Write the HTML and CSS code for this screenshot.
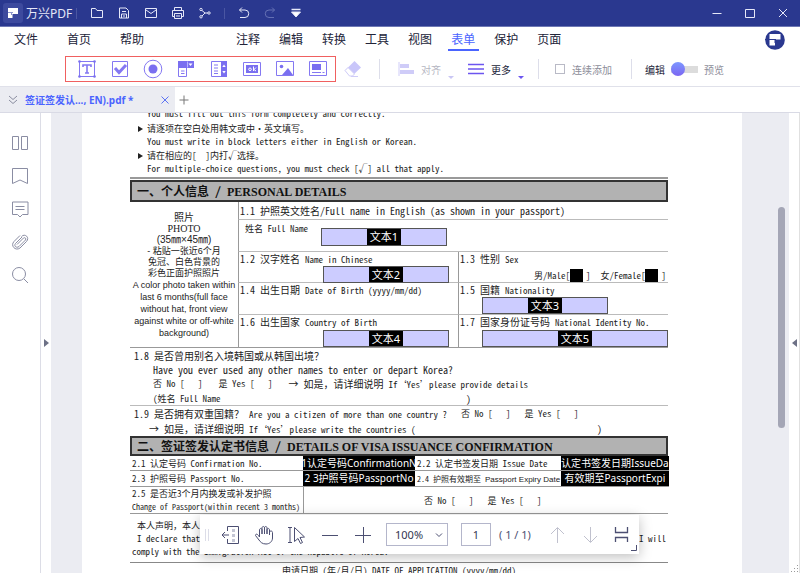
FILE: index.html
```html
<!DOCTYPE html>
<html lang="zh-CN">
<head>
<meta charset="utf-8">
<title>万兴PDF</title>
<link rel="stylesheet" href="styles.css">
</head>
<body>
<div class="app">
  <header class="titlebar">
    <span class="logo"><svg width="20" height="20" viewBox="0 0 20 20"><rect width="20" height="20" rx="3" fill="#3d4a9e"/><path d="M5 5h10v6H9.500V15H5z" fill="#fff"/><path d="M5 9.500h5M8.500 9v3" stroke="#8c95cc" fill="none"/></svg></span>
    <span class="brand">万兴PDF</span>
    <i class="tsep"></i>
    <div class="quick">
      <button aria-label="打开"><svg width="16" height="16" viewBox="0 0 16 16"><path d="M2.500 12.500v-9h4l1.500 2h5.500v7z"/></svg></button>
      <button aria-label="保存"><svg width="16" height="16" viewBox="0 0 16 16"><path d="M3.500 3h6.500l2.500 2.500v7.500h-9zM5.500 13V9h5v4M6 6.500h4M7 11h2"/></svg></button>
      <button aria-label="邮件"><svg width="16" height="16" viewBox="0 0 16 16"><path d="M2.500 3.500h11v9h-11zM3 5l5 3.500L13 5"/></svg></button>
      <button aria-label="打印"><svg width="16" height="16" viewBox="0 0 16 16"><path d="M4.500 5.500v-3h7v3M4.500 11.500h-2v-6h11v6h-2M4.500 8.500h7v5h-7zM6 11h4"/></svg></button>
      <button aria-label="分享"><svg width="16" height="16" viewBox="0 0 16 16"><path d="M5 5.500l3 2.500h3M5 11l3-3"/><circle cx="4" cy="4.500" r="1.200"/><circle cx="4" cy="11.800" r="1.200"/><circle cx="12" cy="8" r="1.200"/></svg></button>
    </div>
    <i class="tsep"></i>
    <div class="history">
      <button aria-label="撤销"><svg width="16" height="16" viewBox="0 0 16 16"><path d="M6 2.500L3.500 5 6 7.500M3.500 5H9a3.700 3.700 0 0 1 0 7.500H4"/></svg></button>
      <button aria-label="重做" class="dim"><svg width="16" height="16" viewBox="0 0 16 16"><path d="M10 2.500L12.500 5 10 7.500M12.500 5H7a3.700 3.700 0 0 0 0 7.500h5"/></svg></button>
      <button aria-label="自定义"><svg width="16" height="16" viewBox="0 0 16 16"><path d="M3.500 4.500h9" stroke-width="1.500"/><path d="M3.500 7h9L8 12z" fill="#fff"/></svg></button>
    </div>
    <div class="window">
      <button aria-label="最小化"><svg width="12" height="12" viewBox="0 0 12 12"><path d="M1.500 6.500h9"/></svg></button>
      <button aria-label="最大化"><svg width="12" height="12" viewBox="0 0 12 12"><path d="M1.500 2.500h9v8h-9z"/></svg></button>
      <button aria-label="关闭"><svg width="12" height="12" viewBox="0 0 12 12"><path d="M2 2l8 8M10 2l-8 8"/></svg></button>
    </div>
  </header>

  <nav class="menu">
    <div class="group first"><a href="#">文件</a><a href="#">首页</a><a href="#">帮助</a></div>
    <div class="group"><a href="#">注释</a><a href="#">编辑</a><a href="#">转换</a><a href="#">工具</a><a href="#">视图</a><a href="#" class="on">表单</a><a href="#">保护</a><a href="#">页面</a></div>
    <span class="account"><svg width="20" height="20" viewBox="0 0 20 20"><circle cx="10" cy="10" r="9.800" fill="#2a388f"/><path d="M4.500 4h11v5.500H10v6H4.500z" fill="#fff"/><path d="M0 9.500h11M10 9v4" stroke="#2a388f" fill="none"/></svg></span>
  </nav>

  <div class="tools">
    <div class="fields">
      <button aria-label="文本域"><svg width="20" height="20" viewBox="0 0 20 20"><path d="M2.500 2.500h15v15h-15z"/><path d="M6 8V6h8v2M10 6v8M8 14h4" stroke-width="1.600"/><g class="solid"><circle cx="2.500" cy="2.500" r="1.300"/><circle cx="17.500" cy="2.500" r="1.300"/><circle cx="2.500" cy="17.500" r="1.300"/><circle cx="17.500" cy="17.500" r="1.300"/></g></svg></button>
      <button aria-label="复选框"><svg width="20" height="20" viewBox="0 0 20 20"><path d="M2.500 2.500h15v15h-15z"/><path d="M5 9l4 4.500 7-7.500" stroke-width="3"/></svg></button>
      <button aria-label="单选按钮"><svg width="20" height="20" viewBox="0 0 20 20"><circle cx="10" cy="10" r="8.800"/><circle cx="10" cy="10" r="4.500" class="solid"/></svg></button>
      <button aria-label="组合框"><svg width="20" height="20" viewBox="0 0 20 20"><path d="M2 2h16v7H2z" class="solid"/><path d="M2.500 9v8.500h8V9M5 12h3.500M5 14.500h3.500"/><path d="M12.500 4.500h4L14.500 7z" fill="#fff" stroke="none"/><path d="M11.500 2.500v6" stroke="#b8b4ff"/></svg></button>
      <button aria-label="列表框"><svg width="20" height="20" viewBox="0 0 20 20"><path d="M2.500 2.500h15v15h-15zM5 6h4M5 9h4M5 12h4M5 14.500h4"/><path d="M12 2h6v16h-6z" class="solid"/><path d="M13.300 8L15 5.500 16.700 8zM13.300 12L15 14.500l1.700-2.500z" fill="#fff" stroke="none"/></svg></button>
      <button aria-label="按钮"><svg width="20" height="20" viewBox="0 0 20 20"><path d="M1.500 3.500h17v13h-17z"/><path d="M4 6h12v8H4z" class="solid"/><circle cx="8" cy="10.300" r="1.300" stroke="#fff"/><path d="M11.500 7.500v4.500M14 8.500L12 10.500l2 1.500" stroke="#fff"/></svg></button>
      <button aria-label="图像"><svg width="20" height="20" viewBox="0 0 20 20"><path d="M1.500 2.500h17v14h-17z"/><path d="M7 16l6-7 5 7z" class="solid"/><circle cx="6.500" cy="7.500" r="1.800" class="solid"/></svg></button>
      <button aria-label="签名域"><svg width="20" height="20" viewBox="0 0 20 20"><path d="M1.500 2.500h17v14h-17z"/><path d="M4 5h9v6H4z" class="solid"/><path d="M4 13.500h9M14.500 13.500h2"/></svg></button>
    </div>
    <button class="eraser" aria-label="清除"><svg width="20" height="20" viewBox="0 0 20 20"><path d="M2 11.500L11.500 2 18 8.500 9.500 16.500z" fill="#c9c6fa"/><path d="M2 11.500l3-3 6.500 6.500-2 2H6.500z" fill="#fff" stroke="#cfccf8"/><path d="M8 17.500h7" stroke="#cfccf8"/></svg></button>
    <i class="sep"></i>
    <button class="txt faded"><svg width="16" height="16" viewBox="0 0 16 16"><path d="M1 1v14" stroke="#cfccf8"/><path d="M2 3h9v4H2zM2 9h14v4H2z" fill="#cfccf8"/></svg><span>对齐</span><i class="caret"></i></button>
    <button class="txt"><svg width="16" height="16" viewBox="0 0 16 16"><path d="M0 3.500h16M0 8h16M0 12.500h16" stroke="#6c55f0" stroke-width="1.500"/></svg><span>更多</span><i class="caret"></i></button>
    <i class="sep"></i>
    <label class="keep"><input type="checkbox">连续添加</label>
    <i class="sep"></i>
    <label class="mode"><span>编辑</span><input type="range" min="0" max="1" value="0" aria-label="编辑或预览"><span class="off">预览</span></label>
  </div>

  <div class="tabs">
    <div class="tab"><svg width="10" height="10" viewBox="0 0 10 10"><path d="M1 1l4 3.500L9 1M1 5l4 3.500L9 5" stroke="#8a8da0"/></svg><strong>签证签发认..., EN).pdf *</strong><button aria-label="关闭标签"><svg width="10" height="10" viewBox="0 0 10 10"><path d="M1.500 1.500l7 7M8.500 1.500l-7 7" stroke="#5b72f5"/></svg></button></div>
    <button class="plus" aria-label="新建标签"><svg width="10" height="10" viewBox="0 0 10 10"><path d="M.5 5h9M5 .5v9" stroke="#777"/></svg></button>
  </div>

  <div class="work">
    <aside class="side">
      <button aria-label="缩略图"><svg width="20" height="20" viewBox="0 0 20 20"><path d="M2.500 3.500h6v13h-6zM11.500 3.500h6v13h-6z"/></svg></button>
      <button aria-label="书签"><svg width="20" height="20" viewBox="0 0 20 20"><path d="M2.500 2.500h15v15L10 14l-7.500 3.500z"/></svg></button>
      <button aria-label="注释"><svg width="20" height="20" viewBox="0 0 20 20"><path d="M2.500 3h15.500v12.500h-5.500L10 18l-2.500-2.500h-5zM5.500 7.500h9M5.500 10.500h9"/></svg></button>
      <button aria-label="附件"><svg width="20" height="20" viewBox="0 0 20 20"><path d="M12 5L5.500 11.500c-2 2.500 1 5 3.500 3L15.500 8c1-1.500-.5-3-2-2L7 12.500M10 3.500L4 9.500c-4 4 1.500 10 6 6.500l6.500-6.500c3.500-4-1.500-8.500-5-5"/></svg></button>
      <button aria-label="搜索"><svg width="20" height="20" viewBox="0 0 20 20"><circle cx="9" cy="9" r="6.500"/><path d="M14 14l4 4"/></svg></button>
    </aside>
    <button class="handle" aria-label="展开左侧面板"><i class="right"></i></button>
    <main class="canvas">
      <article class="page">
        <div class="intro">
          <p class="en top">You must fill out this form completely and correctly.</p>
          <p class="li">请逐项在空白处用韩文或中·英文填写。</p>
          <p class="en">You must write in block letters either in English or Korean.</p>
          <p class="li">请在相应的[&emsp;]内打√选择。</p>
          <p class="en">For multiple-choice questions, you must check [√] all that apply.</p>
        </div>
        <h2>一、个人信息 / <b>PERSONAL DETAILS</b></h2>
        <section class="personal">
          <div class="photo"><p class="big">照片</p><p class="serif">PHOTO</p><p class="big">(35㎜×45㎜)</p><p class="zh">- 粘贴一张近6个月</p><p class="zh">免冠、白色背景的</p><p class="zh">彩色正面护照照片</p><p>A color photo taken within</p><p>last 6 months(full face</p><p>without hat, front view</p><p>against white or off-white</p><p>background)</p></div>
          <div class="cell wide">1.1 护照英文姓名/Full name in English (as shown in your passport)</div>
          <div class="cell wide name"><label for="f1">姓名 Full Name</label><span class="field"><input id="f1"><em>文本1</em></span></div>
          <div class="cell"><label for="f2">1.2 汉字姓名 <small>Name in Chinese</small></label><span class="field"><input id="f2"><em>文本2</em></span></div>
          <div class="cell split"><span>1.3 性别 <small>Sex</small></span><div class="sex"><label>男/Male[<input type="checkbox">]</label><label>女/Female[<input type="checkbox">]</label></div></div>
          <div class="cell"><span>1.4 出生日期 <small>Date of Birth (yyyy/mm/dd)</small></span></div>
          <div class="cell split"><label for="f3">1.5 国籍 <small>Nationality</small></label><span class="field"><input id="f3"><em>文本3</em></span></div>
          <div class="cell"><label for="f4">1.6 出生国家 <small>Country of Birth</small></label><span class="field"><input id="f4"><em>文本4</em></span></div>
          <div class="cell split"><label for="f5">1.7 国家身份证号码 <small>National Identity No.</small></label><span class="field long"><input id="f5"><em>文本5</em></span></div>
        </section>
        <section class="block">
          <p>1.8 是否曾用别名入境韩国或从韩国出境？</p>
          <p class="in">Have you ever used any other names to enter or depart Korea?</p>
          <p class="in gaps"><small>否 No [&emsp;&ensp;]</small><small>是 Yes [&emsp;&ensp;]</small><span>→ 如是，请详细说明 <small>If‘Yes’please provide details</small></span></p>
          <p class="in paren"><small>(姓名 Full Name</small><span>)</span></p>
        </section>
        <section class="block two">
          <p class="gaps"><span>1.9 是否拥有双重国籍？ <small>Are you a citizen of more than one country ?</small></span><small>否 No [&emsp;&ensp;]</small><small>是 Yes [&emsp;&ensp;]</small></p>
          <p class="in paren last"><span>→ 如是，请详细说明 <small>If‘Yes’please write the countries (</small></span><span>)</span></p>
        </section>
        <h2 class="second">二、签证签发认定书信息 / <b>DETAILS OF VISA ISSUANCE CONFIRMATION</b></h2>
        <section class="visa">
          <div>2.1 认定号码 Confirmation No.</div><div class="black"><span>1认定号码ConfirmationN</span></div><div>2.2 认定书签发日期 Issue Date</div><div class="black"><span>认定书签发日期IssueDa</span></div>
          <div>2.3 护照号码 Passport No.</div><div class="black"><span>2 3护照号码PassportNo</span></div><div class="close">2.4 护照有效期至 <span class="sans">Passport Expiry Date</span></div><div class="black"><span>有效期至PassportExpi</span></div>
          <div class="recent"><p>2.5 是否近3个月内换发或补发护照</p><p class="close">Change of Passport(within recent 3 months)</p></div>
          <div class="answer"><span>否 No [&emsp;&ensp;]</span><span>是 Yes [&emsp;&ensp;]</span></div>
        </section>
        <section class="declare">
          <p class="pad">本人声明，本人</p>
          <p class="pad ends"><span>I declare that the statements</span><span>I will</span></p>
          <p>comply with the Immigration Act of the Republic of Korea.</p>
        </section>
        <p class="date">申请日期 (年/月/日) DATE OF APPLICATION (yyyy/mm/dd)</p>
      </article>
      <i class="thumb"></i>
    </main>
    <button class="handle end" aria-label="展开右侧面板"><i class="left"></i></button>
    <svg class="grip" width="8" height="8" viewBox="0 0 8 8"><path d="M6 0h1v1H6zM3 3h1v1H3zM6 3h1v1H6zM0 6h1v1H0zM3 6h1v1H3zM6 6h1v1H6z" fill="#999" stroke="none"/></svg>

    <div class="float">
      <i class="drag"></i>
      <button aria-label="停靠"><svg width="20" height="20" viewBox="0 0 20 20"><path d="M6.500 6V1.500h11v17h-11V14M1 10h7M4 7l-3 3 3 3"/><path d="M12.500 4v13" stroke="#c4c6d4" stroke-width="3" stroke-dasharray="3 2"/></svg></button>
      <button aria-label="抓手"><svg width="20" height="20" viewBox="0 0 20 20"><path d="M5.500 12V5c0-2 2.500-2 2.500 0v4V3c0-2 2.500-2 2.500 0v6V3c0-2 2.500-2 2.500 0v6-4c0-2 2.500-2 2.500 0v5-2.500c0-2 3-2 3 0V13c0 3.500-3 6-6.500 6-4 0-5.500-2-7-4l-3.500-4.500c0-2 2-2 4 1.500"/></svg></button>
      <button aria-label="选择"><svg width="20" height="20" viewBox="0 0 20 20"><path d="M1 2.500h4M3 2.500v15M1 17.500h4M7.500 2.500l10 9.500-4.500.5 2.500 5-2 1-2.500-5-3.500 3z"/></svg></button>
      <button aria-label="缩小"><svg width="20" height="20" viewBox="0 0 20 20"><path d="M2 10.500h16"/></svg></button>
      <button aria-label="放大"><svg width="20" height="20" viewBox="0 0 20 20"><path d="M2 10.500h16M10.500 2v16"/></svg></button>
      <span class="zoom"><select aria-label="缩放"><option>100%</option></select><svg width="8" height="8" viewBox="0 0 8 8"><path d="M1 2.500l3 3 3-3"/></svg></span>
      <input class="num" value="1" aria-label="页码">
      <span class="total">( 1 / 1)</span>
      <button aria-label="上一页" class="pale"><svg width="20" height="20" viewBox="0 0 20 20"><path d="M10.500 18V3M4 9l6.500-6.500L17 9"/></svg></button>
      <button aria-label="下一页" class="pale"><svg width="20" height="20" viewBox="0 0 20 20"><path d="M10.500 2v15M4 11l6.500 6.500L17 11"/></svg></button>
      <button aria-label="阅读模式"><svg width="20" height="20" viewBox="0 0 20 20"><path d="M2.500 2v5.500h12V2M2.500 17v-4.500h12V17" stroke-width="1.300"/></svg></button>
      <svg class="corner" width="6" height="6" viewBox="0 0 6 6"><path d="M0 5.500h5.500V0"/></svg>
    </div>
  </div>
</div>
</body>
</html>
```
FILE: styles.css
```css
* { box-sizing: border-box; }
body { margin: 0; font-family: "Noto Sans", "Noto Sans CJK SC", sans-serif; font-size: 12px; color: #222439; }
p, h2 { margin: 0; font-weight: normal; }
i, em { font-style: normal; flex: none; }
button { border: 0; padding: 0; margin: 0; background: none; font: inherit; color: inherit; display: flex; align-items: center; justify-content: center; flex: none; }
svg { fill: none; stroke: currentColor; display: block; flex: none; }
a { color: inherit; text-decoration: none; }
.app { height: 100vh; display: flex; flex-direction: column; overflow: hidden; background: #fff; }

.titlebar { height: 27px; flex: none; display: flex; align-items: center; background: #2a388f; color: #e6e8f8; border-bottom: 1px solid #6e78b4; }
.logo { margin-left: 3px; }
.logo svg, .account svg, .grip { stroke: none; }
.brand { margin-left: 3px; width: 50px; white-space: nowrap; font-size: 12px; }
.tsep { width: 1px; height: 11px; background: #4a56a2; }
.quick { display: flex; gap: 11px; margin: 0 11px 0 12px; }
.history { display: flex; gap: 10px; margin-left: 11px; }
.dim { color: #6470b4; }
.window { display: flex; gap: 21px; margin-left: auto; padding-right: 11px; }

.menu { height: 27px; flex: none; display: flex; align-items: stretch; }
.group { display: flex; gap: 19px; }
.group.first { gap: 29px; margin: 0 92px 0 14px; }
.menu a { display: block; line-height: 26px; height: 24px; }
.menu a.on { color: #4a64ff; position: relative; }
.menu a.on::after { content: ""; position: absolute; left: -3px; right: -4px; bottom: 0; height: 2px; background: #4a64ff; }
.account { margin: 3px 15px 0 auto; }

.tools { height: 33px; flex: none; display: flex; align-items: center; border-bottom: 1px solid #e0e1ea; padding: 0 0 2px 65px; font-size: 10px; }
.fields { display: flex; align-items: center; gap: 13px; width: 271px; height: 26px; padding-left: 11px; border: 1px solid #f06060; color: #8478f2; flex: none; }
.solid { fill: #7a6ff0; stroke: none; }
.eraser { margin: 0 16px 0 7px; }
.eraser svg, .faded svg { stroke: none; }
.sep { width: 1px; height: 20px; background: #dddeea; }
.txt { position: relative; margin-left: 18px; width: 52px; justify-content: flex-start; gap: 7px; }
.txt .caret { position: absolute; right: -4px; bottom: -2px; border: 3px solid transparent; border-top-color: #6c55f0; border-bottom: 0; }
.txt + .sep { margin-left: 18px; }
.faded { color: #b5b6c2; }
.faded .caret { border-top-color: #c9c6f4; }
.keep { display: flex; align-items: center; gap: 7px; margin: 0 19px 0 16px; color: #8d8e9a; }
.keep input { appearance: none; width: 10px; height: 10px; margin: 0; border: 1px solid #b9bac6; }
.mode { display: flex; align-items: center; gap: 6px; margin-left: 13px; }
.mode .off { color: #8d8e9a; }
.mode input { appearance: none; width: 27px; height: 14px; margin: 0; background: linear-gradient(#dcdcdc, #dcdcdc) center / 27px 7px no-repeat; border-radius: 4px; }
.mode input::-webkit-slider-thumb { appearance: none; width: 14px; height: 14px; border-radius: 50%; background: linear-gradient(#7d97ff, #7c66f2); }

.tabs { height: 26px; flex: none; display: flex; align-items: stretch; border-bottom: 1px solid #d9dae5; }
.tab { display: flex; align-items: center; width: 175px; padding: 0 5px 0 8px; gap: 7px; background: #ebecf2; color: #4a64ff; font-size: 10px; }
.tab strong { flex: 1; white-space: nowrap; }
.plus { margin-left: 4px; }

.work { flex: 1; min-height: 0; display: flex; position: relative; }
.side { width: 41px; flex: none; border-right: 1px solid #dcdde6; color: #8a8da3; display: flex; flex-direction: column; align-items: center; gap: 13px; padding-top: 20px; }
.handle { width: 10px; align-self: stretch; }
.handle.end { width: 11px; border-right: 1px solid #e0e0e0; }
.handle i { border: 4px solid transparent; }
.handle .right { border-left: 5px solid #6d7186; border-right: 0; }
.handle .left { border-right: 5px solid #6d7186; border-left: 0; }
.canvas { flex: 1; min-width: 0; background: #ebecf2; padding: 0 47px 0 31px; overflow: hidden; position: relative; }
.thumb { position: absolute; right: 4px; top: 20%; width: 7px; height: 48%; margin-top: 2px; border-radius: 4px; background: #a4a6b6; }
.grip { position: absolute; right: 1px; bottom: 0; }

.page { background: #fff; height: 100%; padding: 0 74px 0 48px; overflow: hidden; color: #222; font-family: "Noto Sans Mono CJK SC", "Liberation Sans", "Noto Sans CJK SC", sans-serif; font-size: 10px; line-height: 14px; white-space: nowrap; }
.page small { font-size: 9px; }
.intro { padding: 0 0 1px 17px; height: 66px; font-size: 9px; border-bottom: 2px solid #999; margin-bottom: 1px; display: flex; flex-direction: column; justify-content: flex-end; }
.intro .top { padding-bottom: 1px; }
.intro .li { position: relative; line-height: 13px; }
.intro .li::before { content: ""; position: absolute; left: -9px; top: 4px; border: 3px solid transparent; border-left: 5px solid #222; border-right: 0; }
h2 { height: 22px; border: 2px solid #333; background: #b2b2b2; line-height: 18px; padding-left: 5px; font-size: 12px; font-weight: bold; color: #111; }
h2 b { font-family: "Liberation Serif", serif; }
h2.second { height: 20px; line-height: 16px; }

.personal { display: grid; grid-template-columns: 108px 220px 1fr; grid-template-rows: 18px 32px 31px 32px 32px; border-bottom: 1px solid #999; }
.photo, .sans { font-family: "Liberation Sans", "Noto Sans CJK SC", sans-serif; }
.photo { grid-row: 1 / 6; text-align: center; padding-top: 10px; font-size: 9px; line-height: 12px; }
.photo .big { font-size: 10px; }
.photo .serif { font-family: "Liberation Serif", serif; font-size: 10px; line-height: 10px; }
.photo .zh { line-height: 11px; }
.cell { border-left: 1px solid #999; border-bottom: 1px solid #bbb; padding-left: 1px; display: flex; flex-direction: column; justify-content: space-between; line-height: 13px; }
.cell:nth-last-child(-n+2) { border-bottom: 0; }
.wide { grid-column: 2 / 4; line-height: 17px; }
.name { padding-left: 6px; font-size: 9px; flex-direction: row; justify-content: flex-start; align-items: flex-start; }
.field { position: relative; width: 126px; height: 17px; margin-left: 83px; display: block; flex: none; }
.name .field { height: 18px; margin: 8px 0 0 13px; }
.split .field { margin-left: 22px; }
.split .field.long { width: auto; }
.field input { width: 100%; height: 100%; display: block; border: 1px solid #555; background: #ccccff; margin: 0; }
.field em { position: absolute; left: 50%; top: 1px; bottom: 1px; width: 34px; margin-left: -17px; background: #000; color: #fff; text-align: center; font: 11px/15px "Noto Sans", "Noto Sans CJK SC", sans-serif; }
.sex { display: flex; justify-content: flex-end; gap: 10px; padding-right: 2px; }
.sex label { display: flex; align-items: center; font-size: 9px; }
.sex input { appearance: none; width: 13px; height: 13px; margin: 0 3px 0 0; background: #000; }

.block { height: 58px; padding: 1px 0 0 4px; border-bottom: 1px solid #bbb; }
.block.two { height: 30px; border: 0; }
.in { padding-left: 19px; }
.gaps { display: flex; gap: 14px; }
.in.gaps { gap: 16px; }
.paren { display: flex; justify-content: space-between; padding-right: 197px; }
.paren.last { padding: 0 66px 0 15px; }

.visa { display: grid; grid-template-columns: 173px 112px 146px 1fr; grid-template-rows: 15px 16px 26px; border-bottom: 1px solid #999; font-size: 9px; line-height: 15px; }
.visa > div { padding-left: 2px; border-bottom: 1px solid #999; }
.visa > .black { background: #000; color: #fff; display: flex; justify-content: center; padding: 0; font: 10px/14px "Noto Sans", "Noto Sans CJK SC", sans-serif; }
.close { font-size: 8px; }
.visa > .recent { line-height: 13px; border-bottom: 0; }
.visa > .answer { grid-column: 2 / 5; border-left: 1px solid #999; border-bottom: 0; display: flex; gap: 14px; padding-left: 120px; align-items: center; }
.declare { padding: 5px 2px 0; height: 49px; font-size: 9px; line-height: 13px; border-bottom: 1px solid #888; }
.pad { padding-left: 5px; }
.ends { display: flex; justify-content: space-between; }
.date { text-align: center; font-size: 9px; line-height: 16px; }

.float { position: absolute; left: 200px; top: 402px; width: 439px; height: 39px; display: flex; align-items: center; background: #fff; box-shadow: 0 3px 12px rgba(0, 0, 0, .25); color: #4c4f72; padding-left: 5px; gap: 13px; font-size: 11px; }
.drag { width: 4px; height: 12px; border: solid #dcdde8; border-width: 0 1px; margin-right: -1px; }
.zoom { position: relative; width: 62px; height: 23px; }
.zoom select { appearance: none; width: 100%; height: 100%; border: 1px solid #b4b6cb; background: #fff; padding: 0 8px; margin: 0; font: inherit; color: #333650; }
.zoom svg { position: absolute; right: 5px; top: 8px; }
.num { width: 30px; height: 23px; border: 1px solid #b4b6cb; padding: 0; margin: 0; text-align: center; font: inherit; color: #333650; }
.total { width: 35px; margin-left: -5px; white-space: nowrap; }
.pale { color: #c0c1ce; }
.corner { position: absolute; right: 2px; bottom: 3px; }
```
